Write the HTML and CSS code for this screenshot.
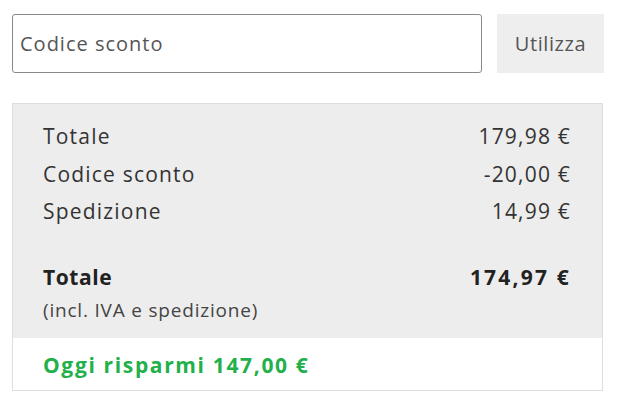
FILE: index.html
```html
<!DOCTYPE html>
<html lang="it">
<head>
<meta charset="utf-8">
<link rel="stylesheet" href="styles.css">
</head>
<body>
<div class="page">
  <div class="coupon">
    <input class="coupon-input" type="text" placeholder="Codice sconto">
    <button class="coupon-btn">Utilizza</button>
  </div>
  <div class="summary">
    <div class="summary-body">
      <div class="row"><span>Totale</span><span>179,98 €</span></div>
      <div class="row"><span>Codice sconto</span><span>-20,00 €</span></div>
      <div class="row"><span>Spedizione</span><span>14,99 €</span></div>
      <div class="row total"><span>Totale</span><span class="total-amount">174,97 €</span></div>
      <div class="note">(incl. IVA e spedizione)</div>
    </div>
    <div class="savings">Oggi risparmi 147,00 €</div>
  </div>
</div>
</body>
</html>
```
FILE: styles.css
```css
* { box-sizing: border-box; }
body {
  margin: 0;
  background: #fff;
  font-family: "Open Sans", "Noto Sans", sans-serif;
  color: #333;
}
.page {
  padding: 14px 14px 0 12px;
  width: 617px;
}
.coupon {
  display: flex;
  gap: 15px;
  height: 59px;
}
.coupon-input {
  flex: 0 0 470px;
  height: 59px;
  border: 1px solid #8a8a8a;
  border-radius: 3px;
  padding: 0 7px;
  font-family: inherit;
  font-size: 20px;
  letter-spacing: 1px;
  color: #333;
  outline: none;
}
.coupon-input::placeholder { color: #555; opacity: 1; }
.coupon-btn {
  flex: 0 0 107px;
  height: 59px;
  border: none;
  background: #eeeeee;
  font-family: inherit;
  font-size: 20px;
  letter-spacing: 0.6px;
  color: #555;
  padding: 0;
}
.summary {
  margin-top: 30px;
  width: 591px;
  border: 1px solid #dedede;
}
.summary-body {
  background: #ededed;
  padding: 14px 31px 14px 30px;
}
.row {
  display: flex;
  justify-content: space-between;
  font-size: 21px;
  letter-spacing: 1.2px;
  line-height: 37.5px;
  color: #333;
}
.row.total {
  margin-top: 28px;
  font-weight: 700;
  letter-spacing: 0.6px;
  color: #222;
}
.row .total-amount {
  letter-spacing: 2.2px;
}
.note {
  font-size: 19px;
  letter-spacing: 0.8px;
  line-height: 28px;
  color: #444;
}
.savings {
  background: #fff;
  padding: 13px 30px 11px;
  font-size: 21px;
  letter-spacing: 1.65px;
  line-height: 28px;
  font-weight: 700;
  color: #22b04b;
}
```
